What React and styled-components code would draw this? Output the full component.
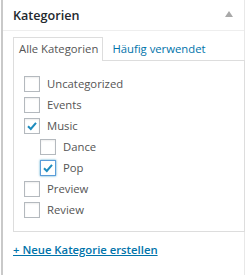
import React from "react";
import styled, { createGlobalStyle } from "styled-components";

const Global = createGlobalStyle`
  body {
    margin: 0;
    background: #fff;
    font-family: "Open Sans", "Liberation Sans", sans-serif;
  }
`;

const Box = styled.div`
  margin-left: 1px;
  width: 241px;
  height: 275px;
  border-left: 2px solid #c9c9c9;
  border-right: 1px solid #e8e8e8;
  background: #fff;
  box-sizing: content-box;
`;

const Header = styled.div`
  height: 30px;
  border-bottom: 1px solid #eee;
  display: flex;
  align-items: center;
  justify-content: space-between;
  padding: 0 11px 0 10px;
  h2 {
    margin: 0;
    font-size: 12.6px;
    font-weight: 600;
    color: #23282d;
  }
`;

const Toggle = styled.span`
  width: 0;
  height: 0;
  border-left: 4px solid transparent;
  border-right: 4px solid transparent;
  border-bottom: 6px solid #a8a8a8;
  margin-top: -2px;
`;

const Inside = styled.div`
  padding: 6px 10px 0 10px;
`;

const Tabs = styled.div`
  display: flex;
  align-items: flex-end;
  font-size: 11.3px;
  white-space: nowrap;
`;

const Tab = styled.a`
  display: block;
  padding: ${p => (p.$active ? "3px 4px 4px 5px" : "3px 6px 4px 8px")};
  color: ${p => (p.$active ? "#555" : "#0073aa")};
  background: ${p => (p.$active ? "#fff" : "transparent")};
  border: 1px solid ${p => (p.$active ? "#ddd" : "transparent")};
  border-bottom: none;
  margin-bottom: -1px;
  position: relative;
  z-index: 1;
  line-height: 16px;
  text-decoration: none;
`;

const Panel = styled.div`
  border: 1px solid #ddd;
  width: 220px;
  padding: 12px 0 11px 10px;
`;

const List = styled.ul`
  list-style: none;
  margin: 0;
  padding: 0;
`;

const Row = styled.li`
  display: flex;
  align-items: center;
  height: 21px;
  padding-left: ${p => (p.$level || 0) * 16}px;
  font-size: 11.3px;
  color: #555;
`;

const Check = styled.span`
  width: 14px;
  height: 14px;
  border: 1px solid ${p => (p.$focus ? "#5b9dd9" : "#b4b9be")};
  box-shadow: ${p =>
    p.$focus
      ? "0 0 2px rgba(30,140,190,.8)"
      : "inset 0 1px 2px rgba(0,0,0,.07)"};
  background: #fff;
  margin-right: 7px;
  display: flex;
  align-items: center;
  justify-content: center;
  flex-shrink: 0;
`;

const AddLink = styled.a`
  display: inline-block;
  margin-top: 10px;
  font-size: 11.3px;
  font-weight: 600;
  color: #0073aa;
  text-decoration: underline;
  line-height: 16px;
`;

const items = [
  { name: "Uncategorized" },
  { name: "Events" },
  { name: "Music", checked: true },
  { name: "Dance", level: 1 },
  { name: "Pop", level: 1, checked: true, focus: true },
  { name: "Preview" },
  { name: "Review" },
];

const Tick = () => (
  <svg width="12" height="12" viewBox="0 0 12 12">
    <path d="M2 6.2 L4.8 9 L10 2.8" fill="none" stroke="#1e8cbe" strokeWidth="2" />
  </svg>
);

export default function App() {
  return (
    <>
      <Global />
      <Box>
        <Header>
          <h2>Kategorien</h2>
          <Toggle />
        </Header>
        <Inside>
          <Tabs>
            <Tab $active>Alle Kategorien</Tab>
            <Tab>Häufig verwendet</Tab>
          </Tabs>
          <Panel>
            <List>
              {items.map(it => (
                <Row key={it.name} $level={it.level}>
                  <Check $focus={it.focus}>{it.checked && <Tick />}</Check>
                  {it.name}
                </Row>
              ))}
            </List>
          </Panel>
          <AddLink>+ Neue Kategorie erstellen</AddLink>
        </Inside>
      </Box>
    </>
  );
}
